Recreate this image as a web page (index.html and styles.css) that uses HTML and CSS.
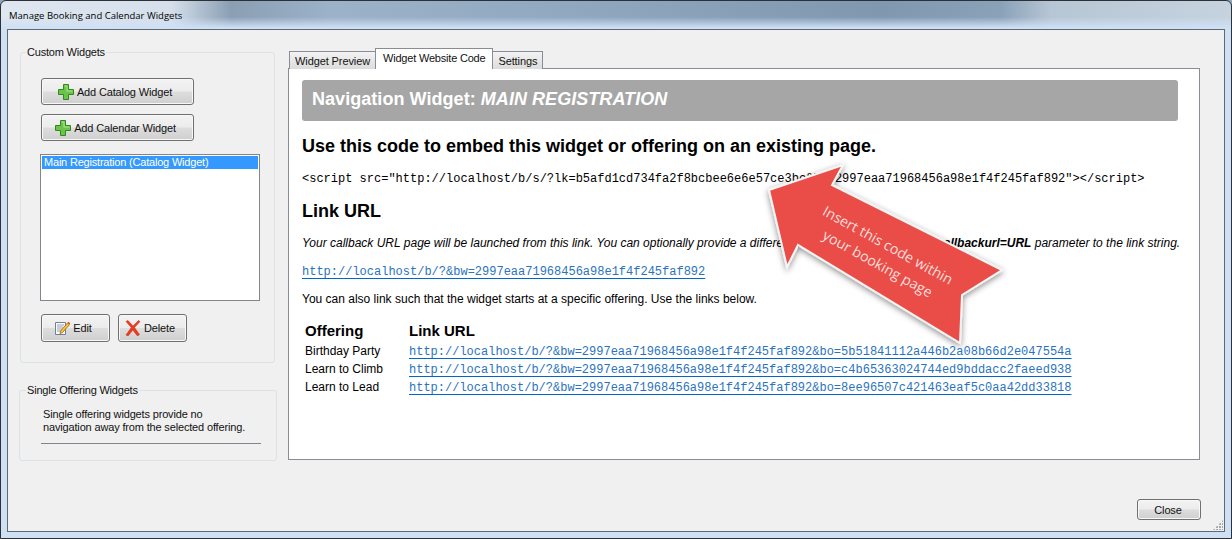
FILE: index.html
```html
<!DOCTYPE html>
<html lang="en">
<head>
<meta charset="utf-8">
<title>Manage Booking and Calendar Widgets</title>
<link rel="stylesheet" href="styles.css">
</head>
<body>
<div class="window">
  <div class="titlebar">Manage Booking and Calendar Widgets</div>
  <div class="client">
    <div class="main">
      <aside class="sidebar">
        <fieldset class="group group-custom">
          <legend>Custom Widgets</legend>
          <button class="btn btn-wide btn-catalog">
            <svg class="ico" viewBox="0 0 16 16"><path d="M5.5.5h5v5h5v5h-5v5h-5v-5h-5v-5h5z" fill="#6cc24a" stroke="#2f8a1e"/><path d="M6.5 1.5h3v5h5v1h-6v-5h-2z" fill="#a9e58c"/></svg>
            Add Catalog Widget
          </button>
          <button class="btn btn-wide btn-calendar">
            <svg class="ico" viewBox="0 0 16 16"><path d="M5.5.5h5v5h5v5h-5v5h-5v-5h-5v-5h5z" fill="#6cc24a" stroke="#2f8a1e"/><path d="M6.5 1.5h3v5h5v1h-6v-5h-2z" fill="#a9e58c"/></svg>
            Add Calendar Widget
          </button>
          <div class="listbox"><div class="listitem">Main Registration (Catalog Widget)</div></div>
          <div class="btn-row">
            <button class="btn btn-small">
              <svg class="ico" viewBox="0 0 16 16"><path d="M1.5 2.5h10v12h-10z" fill="#fbfbf4" stroke="#6f7f9a"/><path d="M3 5h7M3 7h6M3 9h5M3 11h6" stroke="#8fa2bf"/><path d="M6.5 11l7-8 2 1.600-7 8-2.500 1z" fill="#f3c13a" stroke="#a66a12" stroke-width=".8"/><path d="M13.500 3l1-1.300 1.600 1.300-1 1.400z" fill="#e8503a"/></svg>
              Edit
            </button>
            <button class="btn btn-small">
              <svg class="ico" viewBox="0 0 16 16"><path d="M1 1.500l2-1 5 5.500 5.500-5.500 1.500 1-5.500 6 5 7-2 1.500-4.700-6-4.800 6-2-1 5.300-7.500z" fill="#ee3b1e" stroke="#c9240c" stroke-width=".5"/></svg>
              Delete
            </button>
          </div>
        </fieldset>
        <fieldset class="group group-single">
          <legend>Single Offering Widgets</legend>
          <p class="single-text">Single offering widgets provide no<br>navigation away from the selected offering.</p>
          <div class="clipped-list"></div>
        </fieldset>
      </aside>
      <section class="tabs">
        <nav class="tabstrip">
          <span class="tab">Widget Preview</span>
          <span class="tab tab-active">Widget Website Code</span>
          <span class="tab">Settings</span>
        </nav>
        <div class="panel">
          <h1 class="banner">Navigation Widget: <em>MAIN REGISTRATION</em></h1>
          <h2 class="h-embed">Use this code to embed this widget or offering on an existing page.</h2>
          <code class="code">&lt;script src="http://localhost/b/s/?lk=b5afd1cd734fa2f8bcbee6e6e57ce3bc&amp;bw=2997eaa71968456a98e1f4f245faf892"&gt;&lt;/script&gt;</code>
          <h2 class="h-link">Link URL</h2>
          <p class="note">Your callback URL page will be launched from this link. You can optionally provide a different callback URL by using a <b>&amp;callbackurl=URL</b> parameter to the link string.</p>
          <p class="main-link"><a href="#">http://localhost/b/?&amp;bw=2997eaa71968456a98e1f4f245faf892</a></p>
          <p class="also">You can also link such that the widget starts at a specific offering. Use the links below.</p>
          <table class="offers">
            <thead><tr><th class="col-name">Offering</th><th>Link URL</th></tr></thead>
            <tbody>
              <tr><td>Birthday Party</td><td><a href="#">http://localhost/b/?&amp;bw=2997eaa71968456a98e1f4f245faf892&amp;bo=5b51841112a446b2a08b66d2e047554a</a></td></tr>
              <tr><td>Learn to Climb</td><td><a href="#">http://localhost/b/?&amp;bw=2997eaa71968456a98e1f4f245faf892&amp;bo=c4b65363024744ed9bddacc2faeed938</a></td></tr>
              <tr><td>Learn to Lead</td><td><a href="#">http://localhost/b/?&amp;bw=2997eaa71968456a98e1f4f245faf892&amp;bo=8ee96507c421463eaf5c0aa42dd33818</a></td></tr>
            </tbody>
          </table>
        </div>
      </section>
    </div>
    <footer class="footer"><button class="btn btn-close">Close</button></footer>
    <div class="grip"></div>
  </div>
  <svg class="arrow" viewBox="0 0 260 200" width="260" height="200">
    <defs><filter id="sh" x="-10%" y="-10%" width="120%" height="120%"><feDropShadow dx="0" dy="2" stdDeviation="3" flood-color="#000" flood-opacity=".45"/></filter></defs>
    <polygon points="98,7 87,27 257,112 217,137 215,185 53,87 42,109 24,32" fill="#ea4e47" stroke="#f4f4f4" stroke-width="2" filter="url(#sh)"/>
  </svg>
  <div class="arrow-text">Insert this code within<br>your booking page</div>
</div>
</body>
</html>
```
FILE: styles.css
```css
* { box-sizing: border-box; }
html, body { margin: 0; height: 100%; overflow: hidden; }
body { font-family: "Liberation Sans", Arial, sans-serif; font-size: 12px; color: #000; background: #8fa6bb; }

.window {
  position: relative;
  width: 1232px;
  height: 539px;
  display: flex;
  flex-direction: column;
  padding: 0 6px 6px;
  border: 1px solid #2c3138;
  border-radius: 6px 6px 0 0;
  background:
    linear-gradient(180deg, rgba(206,224,246,0) 0, rgba(206,224,246,0) 16px, #cfe0f5 27px),
    linear-gradient(90deg, #dfe7f0 0, #d5dfeb 170px, #8a9fb4 230px, #9cb2c8 330px, #8ea7bf 600px, #7f98b0 880px, #8aa2b8 1000px, #b7c6d4 1050px, #c6d3df 1232px);
}

.titlebar {
  height: 28px;
  flex: none;
  padding: 8px 0 0 2px;
  font-family: "Open Sans", "Liberation Sans", sans-serif;
  font-size: 9.500px;
  line-height: 14px;
  white-space: nowrap;
}

.client {
  position: relative;
  flex: 1;
  display: flex;
  flex-direction: column;
  background: #f0f0f0;
  border: 1px solid #5f6873;
  color: #111;
}

.main { flex: none; display: flex; height: 431px; }

.sidebar { width: 280px; flex: none; padding: 15px 0 0 11px; }

.group {
  margin: 0;
  min-width: 0;
  border: 1px solid #dbe2e6;
  border-radius: 3px;
  padding: 0;
}
.group legend {
  padding: 0 1px;
  line-height: 14px;
  font-size: 11px;
  letter-spacing: -.2px;
}
.group-custom { width: 255px; height: 318px; margin-left: 1px; padding: 19px 0 0 20px; }
.group-custom legend { margin-left: -15px; }
.group-single { width: 258px; height: 78px; margin-top: 20px; padding: 11px 0 0 21px; }
.group-single legend { margin-left: -15px; }

.btn {
  display: flex;
  align-items: center;
  justify-content: center;
  gap: 3px;
  padding: 0;
  font-family: "Liberation Sans", Arial, sans-serif;
  font-size: 11px;
  letter-spacing: -.15px;
  color: #111;
  border: 1px solid #707070;
  border-radius: 3px;
  background: linear-gradient(180deg, #f3f3f3 0, #ececec 48%, #dddddd 52%, #cfcfcf 100%);
  box-shadow: inset 0 0 0 1px #f8f8f8;
}
.btn-wide { width: 153px; height: 27px; padding-right: 5px; }
.btn-catalog { margin-bottom: 9px; }
.btn-calendar { margin-bottom: 13px; padding-right: 4px; }
.btn-small { width: 69px; height: 28px; padding-right: 5px; }
.btn-close { width: 64px; height: 21px; padding-right: 2px; }
.ico { width: 16px; height: 16px; flex: none; }

.listbox {
  width: 220px;
  height: 147px;
  margin-left: -1px;
  border: 1px solid #82858c;
  background: #fff;
  padding: 1px;
}
.listitem { height: 13px; line-height: 13px; font-size: 11px; letter-spacing: -.2px; background: #3399ff; color: #fff; padding-left: 2px; white-space: nowrap; }
.btn-row { display: flex; gap: 8px; margin-top: 13px; }

.single-text { margin: 0 0 9px; font-size: 11px; letter-spacing: -.16px; line-height: 13px; padding-left: 2px; color: #111; white-space: nowrap; }
.clipped-list { width: 220px; border-top: 1px solid #82858c; }

.tabs { flex: none; width: 912px; padding-top: 18px; display: flex; flex-direction: column; }
.tabstrip { display: flex; align-items: flex-end; height: 21px; padding-left: 1px; position: relative; z-index: 1; margin-bottom: -1px; }
.tab {
  height: 18px;
  line-height: 18px;
  padding: 0 5px;
  font-size: 11px;
  letter-spacing: -.1px;
  border: 1px solid #898c95;
  border-bottom: 0;
  background: linear-gradient(180deg, #f3f3f3, #dcdcdc);
  margin-right: -1px;
  white-space: nowrap;
}
.tab-active { height: 21px; line-height: 18px; background: #fff; padding: 0 7px; letter-spacing: -.2px; position: relative; z-index: 1; }
.panel {
  flex: none;
  height: 392px;
  border: 1px solid #898c95;
  background: #fff;
  padding: 11px 21px 0 13px;
  color: #000;
}

.banner {
  margin: 0;
  height: 41px;
  line-height: 39px;
  border-radius: 3px;
  background: #a6a6a6;
  color: #fff;
  padding-left: 10px;
  font-size: 18px;
  font-weight: 700;
  letter-spacing: .05px;
}
.banner em { font-style: italic; }
.h-embed, .h-link { margin: 0; font-size: 18px; font-weight: 700; line-height: 22px; }
.h-embed { margin-top: 14px; }
.code { display: block; margin-top: 15px; font-family: "Liberation Mono", "Courier New", monospace; font-size: 12px; line-height: 14px; white-space: nowrap; }
.h-link { margin-top: 14px; }
.note { margin: 14px 0 0; font-style: italic; line-height: 14px; white-space: nowrap; }
.main-link { margin: 14px 0 0; line-height: 14px; }
a { font-family: "Liberation Mono", "Courier New", monospace; font-size: 12px; color: #2a73c0; text-decoration: underline 1px #0066cc; text-underline-offset: 3px; }
.also { margin: 13px 0 0; line-height: 14px; white-space: nowrap; }

.offers { border-collapse: collapse; margin: 14px 0 0 3px; }
.offers th { font-size: 15px; font-weight: 700; line-height: 22px; text-align: left; padding: 0; }
.col-name { width: 104px; }
.offers td { padding: 0; height: 18px; line-height: 14px; white-space: nowrap; }

.footer { flex: 1; display: flex; justify-content: flex-end; align-items: flex-start; padding: 38px 23px 0 0; }
.grip {
  position: absolute;
  right: 1px;
  bottom: 1px;
  width: 10px;
  height: 10px;
  background: radial-gradient(circle at 1px 1px, #a9a9a9 1px, transparent 1.200px) 0 0 / 3px 3px;
  clip-path: polygon(100% 0, 100% 100%, 0 100%);
}

.arrow { position: absolute; left: 744px; top: 157px; overflow: visible; pointer-events: none; }
.arrow-text {
  position: absolute;
  left: 806px;
  top: 232px;
  width: 152px;
  height: 42px;
  color: #fbdedb;
  font-family: "Open Sans", "Liberation Sans", sans-serif;
  font-size: 14.200px;
  line-height: 21px;
  text-align: center;
  white-space: nowrap;
  transform: rotate(29deg);
}
```
